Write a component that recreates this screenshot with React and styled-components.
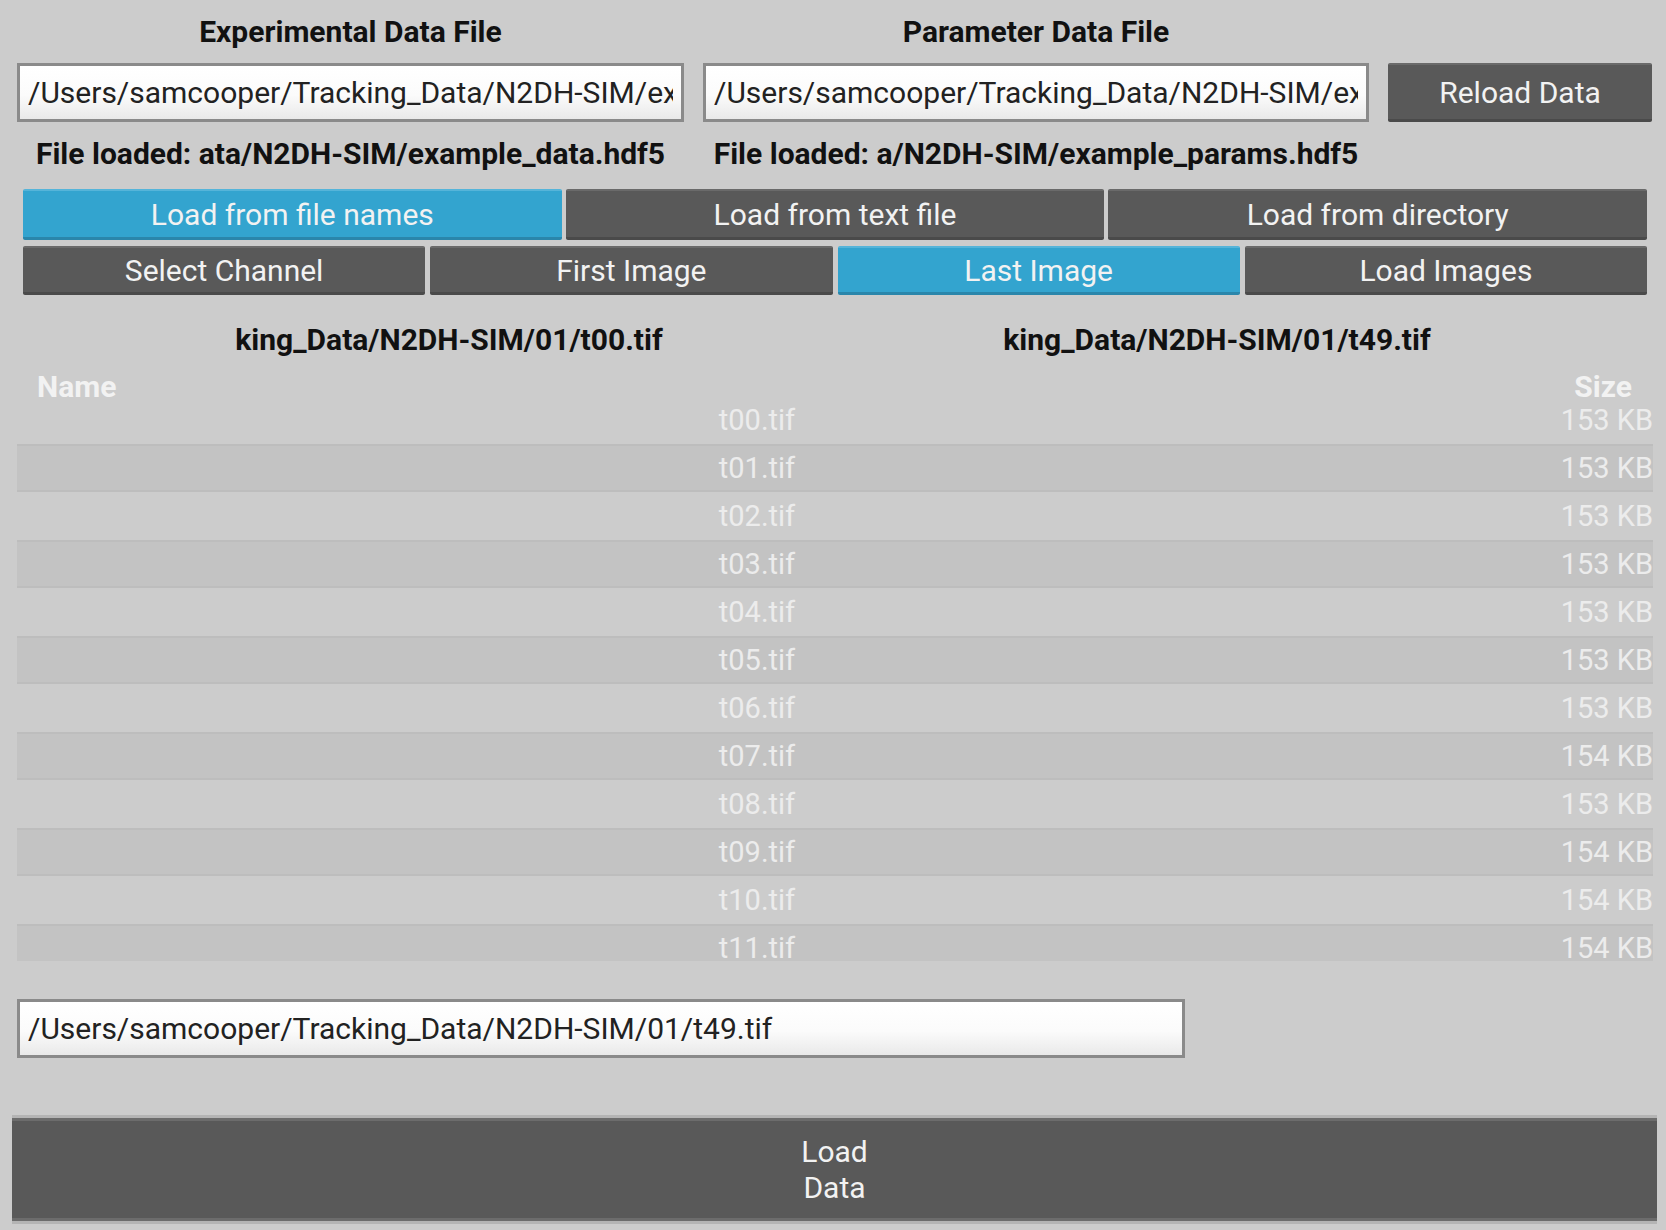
import React from "react";
import styled, { createGlobalStyle } from "styled-components";

const GlobalStyle = createGlobalStyle`
  html, body {
    margin: 0;
    padding: 0;
    background: #cccccc;
  }
  body {
    font-family: Roboto, "Liberation Sans", sans-serif;
  }
`;

const files = [
  ["t00.tif", "153 KB"],
  ["t01.tif", "153 KB"],
  ["t02.tif", "153 KB"],
  ["t03.tif", "153 KB"],
  ["t04.tif", "153 KB"],
  ["t05.tif", "153 KB"],
  ["t06.tif", "153 KB"],
  ["t07.tif", "154 KB"],
  ["t08.tif", "153 KB"],
  ["t09.tif", "154 KB"],
  ["t10.tif", "154 KB"],
  ["t11.tif", "154 KB"],
];

const App = () => {
  return (
    <Page>
      <GlobalStyle />
      <FileGrid>
        <Title>Experimental Data File</Title>
        <Title>Parameter Data File</Title>
        <span />
        <PathInput readOnly value="/Users/samcooper/Tracking_Data/N2DH-SIM/example_data.hdf5" />
        <PathInput readOnly value="/Users/samcooper/Tracking_Data/N2DH-SIM/example_params.hdf5" />
        <Button>Reload Data</Button>
        <Loaded>File loaded: ata/N2DH-SIM/example_data.hdf5</Loaded>
        <Loaded>File loaded: a/N2DH-SIM/example_params.hdf5</Loaded>
        <span />
      </FileGrid>

      <ButtonRows>
        <ButtonRow>
          <Button active>Load from file names</Button>
          <Button>Load from text file</Button>
          <Button>Load from directory</Button>
        </ButtonRow>
        <ButtonRow small>
          <Button>Select Channel</Button>
          <Button>First Image</Button>
          <Button active>Last Image</Button>
          <Button>Load Images</Button>
        </ButtonRow>
      </ButtonRows>

      <ImageLabels>
        <Title>king_Data/N2DH-SIM/01/t00.tif</Title>
        <Title>king_Data/N2DH-SIM/01/t49.tif</Title>
      </ImageLabels>

      <Table>
        <HeaderRow>
          <HeadCell>Name</HeadCell>
          <HeadCell right>Size</HeadCell>
        </HeaderRow>
        <Rows>
          {files.map(([name, size], i) => (
            <FileRow key={name} odd={i % 2 === 1}>
              <NameCell>{name}</NameCell>
              <SizeCell>{size}</SizeCell>
            </FileRow>
          ))}
        </Rows>
      </Table>

      <SelectedInput readOnly value="/Users/samcooper/Tracking_Data/N2DH-SIM/01/t49.tif" />

      <LoadButton>
        Load
        <br />
        Data
      </LoadButton>
    </Page>
  );
};

export default App;

const Page = styled.div`
  width: 1666px;
  height: 1230px;
  background: #cccccc;
  overflow: hidden;
  display: flex;
  flex-direction: column;
`;

const FileGrid = styled.div`
  display: grid;
  grid-template-columns: 667px 666px 264px;
  grid-template-rows: 63px 59px 62px;
  column-gap: 19px;
  margin-left: 17px;
  align-items: center;
`;

const Title = styled.div`
  font-size: 30px;
  font-weight: 700;
  color: #111;
  text-align: center;
  white-space: nowrap;
  overflow: hidden;
`;

const Loaded = styled(Title)`
  overflow: visible;
`;

const PathInput = styled.input`
  box-sizing: border-box;
  width: 100%;
  height: 59px;
  margin: 0;
  padding: 0 8px;
  border: 3px solid #8a8a8a;
  background: linear-gradient(#ffffff, #fbfbfb 55%, #e9e9e9);
  font-family: Roboto, "Liberation Sans", sans-serif;
  font-size: 30px;
  color: #222;
  outline: none;
`;

const Button = styled.div`
  box-sizing: border-box;
  height: 100%;
  flex: 1;
  display: flex;
  align-items: center;
  justify-content: center;
  background: ${(p) => (p.active ? "#33a4cf" : "#595959")};
  border-top: 2px solid ${(p) => (p.active ? "#55b4d9" : "#6a6a6a")};
  border-bottom: 3px solid ${(p) => (p.active ? "#2a86ab" : "#4a4a4a")};
  border-radius: 2px;
  color: #f2f2f2;
  font-size: 30px;
  white-space: nowrap;
`;

const ButtonRows = styled.div`
  display: flex;
  flex-direction: column;
  gap: 6px;
  margin: 5px 0 0 23px;
  width: 1624px;
`;

const ButtonRow = styled.div`
  display: flex;
  gap: ${(p) => (p.small ? "5px" : "4px")};
  height: ${(p) => (p.small ? "49px" : "51px")};
`;

const ImageLabels = styled.div`
  display: grid;
  grid-template-columns: 768px 768px;
  margin-left: 65px;
  height: 75px;
  box-sizing: border-box;
  padding-top: 28px;
  line-height: 34px;
`;

const Table = styled.div`
  margin-left: 17px;
  width: 1636px;
  display: flex;
  flex-direction: column;
`;

const HeaderRow = styled.div`
  box-sizing: border-box;
  height: 26px;
  padding-top: 8px;
  display: flex;
  justify-content: space-between;
  align-items: center;
`;

const HeadCell = styled.div`
  font-size: 30px;
  font-weight: 700;
  line-height: 34px;
  color: #f2f2f2;
  padding: ${(p) => (p.right ? "0 21px 0 0" : "0 0 0 20px")};
`;

const Rows = styled.div`
  height: 565px;
  overflow: hidden;
`;

const FileRow = styled.div`
  box-sizing: border-box;
  height: 48px;
  display: flex;
  align-items: center;
  background: ${(p) => (p.odd ? "#c3c3c3" : "transparent")};
  border-top: 2px solid ${(p) => (p.odd ? "#bdbdbd" : "transparent")};
  border-bottom: 2px solid ${(p) => (p.odd ? "#bdbdbd" : "transparent")};
  font-size: 29px;
  color: #ececec;
`;

const NameCell = styled.div`
  width: 1480px;
  text-align: center;
`;

const SizeCell = styled.div`
  flex: 1;
  text-align: right;
`;

const SelectedInput = styled(PathInput)`
  width: 1168px;
  margin: 38px 0 0 17px;
`;

const LoadButton = styled.div`
  box-sizing: border-box;
  margin: 60px 0 0 12px;
  width: 1645px;
  height: 103px;
  background: #595959;
  border-top: 3px solid #6c6c6c;
  border-bottom: 3px solid #6c6c6c;
  box-shadow: 0 -3px 0 #b4b4b4, 0 3px 0 #b4b4b4;
  display: flex;
  align-items: center;
  justify-content: center;
  text-align: center;
  color: #f2f2f2;
  font-size: 30px;
  line-height: 36px;
`;
